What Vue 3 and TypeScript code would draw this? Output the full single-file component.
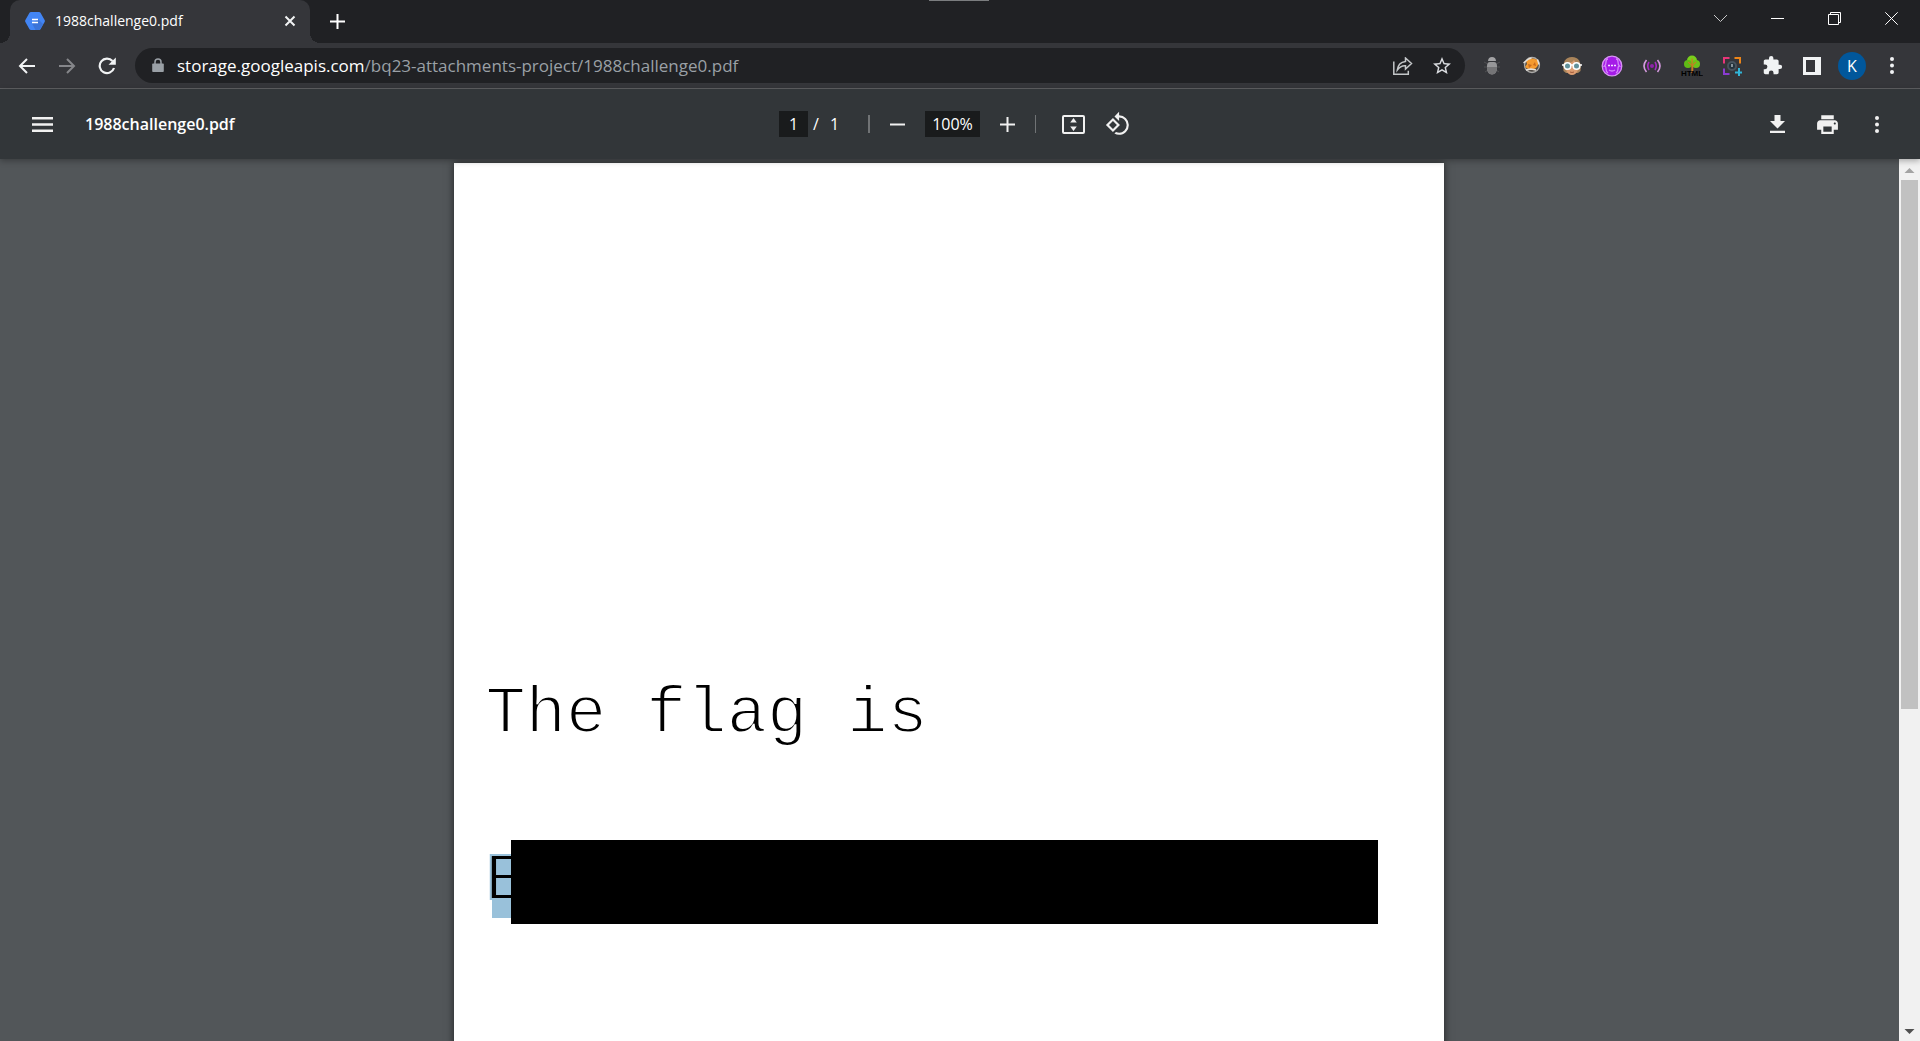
<script setup lang="ts">
import { ref } from 'vue'

interface Extension {
  id: string
  label: string
}

const fileName = '1988challenge0.pdf'
const host = 'storage.googleapis.com'
const path = '/bq23-attachments-project/1988challenge0.pdf'
const page = ref('1')
const zoom = ref('100%')

const extensions: Extension[] = [
  { id: 'bug', label: 'Bug extension' },
  { id: 'fox', label: 'Proxy switcher' },
  { id: 'face', label: 'Spy glasses' },
  { id: 'purple', label: 'Code extension' },
  { id: 'signal', label: 'Signal extension' },
  { id: 'tree', label: 'HTML tree' },
  { id: 'capture', label: 'Screen capture' },
  { id: 'puzzle', label: 'Extensions' },
  { id: 'panel', label: 'Side panel' },
]
</script>

<template>
  <div class="window">
    <div class="handle"></div>
    <header class="tabstrip">
      <div class="tab">
        <svg class="favicon" width="20" height="18" viewBox="0 0 20 18">
          <path d="M6 0h8q1 0 1.500 .8l4.100 7.200q.6 1 0 2l-4.100 7.200Q15 18 14 18H6q-1 0-1.500-.8L.4 10q-.6-1 0-2L4.500.8Q5 0 6 0z" fill="#4285f4" />
          <path d="M13 7l5 5-3 5.500-1 .5h-3.500L7 11.500z" fill="#3b74d8" />
          <path d="M7 7.500h6M7 10.500h6" stroke="#fff" stroke-width="1.300" />
        </svg>
        <span class="tab-title">{{ fileName }}</span>
        <button class="tab-close" aria-label="Close tab">
          <svg width="12" height="12" viewBox="0 0 12 12"><path d="M1.500 1.500l9 9M10.500 1.500l-9 9" stroke="#f1f3f4" stroke-width="2" /></svg>
        </button>
      </div>
      <button class="new-tab" aria-label="New tab">
        <svg width="15" height="15" viewBox="0 0 15 15"><path d="M7.500 0v15M0 7.500h15" stroke="#fff" stroke-width="2" /></svg>
      </button>
      <div class="controls">
        <button aria-label="Search tabs">
          <svg width="15" height="15" viewBox="0 0 15 15" fill="none"><path d="M1 4l6.500 6.500L14 4" stroke="#c8c9ca" /></svg>
        </button>
        <button aria-label="Minimize">
          <svg width="13" height="13" viewBox="0 0 13 13"><path d="M0 6.500h13" stroke="#fff" /></svg>
        </button>
        <button aria-label="Restore">
          <svg width="13" height="13" viewBox="0 0 13 13" fill="none" stroke="#fff"><path d="M.5 2.500h10v10H.5zM2.500 2.500v-2h10v10h-2" /></svg>
        </button>
        <button aria-label="Close">
          <svg width="13" height="13" viewBox="0 0 13 13"><path d="M.3.3l12.400 12.400M12.700.3L.3 12.700" stroke="#fff" /></svg>
        </button>
      </div>
    </header>

    <nav class="toolbar">
      <button class="nav-btn" aria-label="Back">
        <svg width="18" height="18" viewBox="0 0 18 18" fill="none" stroke="#f1f3f4" stroke-width="2"><path d="M17 9H2.500M9 2L2 9l7 7" /></svg>
      </button>
      <button class="nav-btn" aria-label="Forward">
        <svg width="18" height="18" viewBox="0 0 18 18" fill="none" stroke="#85868a" stroke-width="2"><path d="M1 9h14.500M9 2l7 7-7 7" /></svg>
      </button>
      <button class="nav-btn" aria-label="Reload">
        <svg width="18" height="18" viewBox="0 0 18 18" fill="none"><path d="M14.500 4A7.300 7.300 0 1 0 16 11" stroke="#f1f3f4" stroke-width="2.200" /><path d="M17.800.5v7.300h-7.300z" fill="#f1f3f4" /></svg>
      </button>
      <div class="omnibox">
        <svg class="lock" width="12" height="16" viewBox="0 0 12 16"><path d="M1 5.500h10q.8 0 .8.900v6.700q0 .9-.8.900H1q-.8 0-.8-.9V6.400q0-.9.800-.9z" fill="#9aa0a6" /><path d="M3 6V4a3 3 0 0 1 6 0v2" fill="none" stroke="#9aa0a6" stroke-width="1.500" /></svg>
        <a class="url" href="#">{{ host }}<span>{{ path }}</span></a>
        <button class="omni-btn" aria-label="Share">
          <svg width="20" height="18" viewBox="0 0 20 18" fill="none" stroke="#c4c7c9" stroke-width="1.500"><path d="M.8 4.500v12.700h14.500v-3.500" /><path d="M12.500 1l6 5.500-6 5.500V8.800C9 8.500 6.500 10 4.300 13c.5-4.500 3-8 8.200-8.600z" /></svg>
        </button>
        <button class="omni-btn" aria-label="Bookmark this tab">
          <svg width="18" height="18" viewBox="0 0 20 20"><path d="M20 7.240l-7.190-.62L10 0 7.190 6.630 0 7.240l5.460 4.730L3.820 19 10 15.270 16.180 19l-1.630-7.030L20 7.240zM10 13.400l-3.760 2.270 1-4.280-3.320-2.880 4.380-.38L10 4.100l1.710 4.040 4.380.38-3.320 2.880 1 4.280L10 13.400z" fill="#dadce0" /></svg>
        </button>
      </div>

      <div class="extensions">
        <button v-for="ext in extensions" :key="ext.id" :aria-label="ext.label">
          <svg v-if="ext.id === 'bug'" width="20" height="20" viewBox="0 0 20 20">
            <path d="M2 6l3 1.500M18 6l-3 1.500M2 11h3M18 11h-3M3 16l3-2M17 16l-3-2" stroke="#505053" />
            <path d="M6 5q.3-4 4-4t4 4z" fill="#a3a3a5" /><path d="M5 10q0-4 3-4h4q3 0 3 4v2q-.5 6.500-5 6.500T5 12z" fill="#979799" /><path d="M5 11h10v1q-.5 6.500-5 6.500T5 12z" fill="#757577" />
          </svg>
          <svg v-else-if="ext.id === 'fox'" width="20" height="20" viewBox="0 0 20 20">
            <circle cx="10" cy="9" r="7.500" fill="#4f4a45" stroke="#aaa9a7" stroke-width="1.300" />
            <path d="M4 5q3-3 7-2.500l5 1.500q1 5-2 8-4 3-8 1l-3-2 2-3z" fill="#f49a2e" />
            <path d="M1.500 7l5-4 3-1M4 14l5-1 5 1M15.500 3.500l1.500 5" fill="none" stroke="#e6e2dc" stroke-width="1.400" /><path d="M6 8l4 1-3 3zM13 6l-2 3 3 1z" fill="#c96a1c" />
          </svg>
          <svg v-else-if="ext.id === 'face'" width="20" height="20" viewBox="0 0 20 20">
            <path d="M1.500 15Q0 1 10 1t8.500 14L16 17H4z" fill="#a9845a" /><path d="M4 8q6-1 8-4 1 3 4 4v6q-2 5-6 5t-6-5z" fill="#dc9d71" />
            <path d="M0 9h20" stroke="#fff" stroke-width="1.500" /><circle cx="5.500" cy="10" r="3.300" fill="#62929b" stroke="#fff" stroke-width="1.600" /><circle cx="14.500" cy="10" r="3.300" fill="#62929b" stroke="#fff" stroke-width="1.600" />
            <path d="M8 16q2 1 4 0" fill="none" stroke="#a15b3c" />
          </svg>
          <svg v-else-if="ext.id === 'purple'" width="22" height="22" viewBox="0 0 22 22" fill="none">
            <circle cx="11" cy="11" r="9.800" fill="#a51be8" stroke="#d893f5" stroke-width="1.300" />
            <path d="M7 4Q5 4 5 7t-1.500 4Q5 11 5 14t2 4M15 4q2 0 2 3t1.500 4Q17 11 17 14t-2 4M8 15q3 2 6 0" stroke="#d287f7" stroke-width="1.300" /><path d="M7 10.500h2M10 10.500h2M13 10.500h2" stroke="#f5dfff" stroke-width="1.500" />
          </svg>
          <svg v-else-if="ext.id === 'signal'" width="18" height="14" viewBox="0 0 18 14" fill="none">
            <circle cx="9" cy="7" r="2" fill="#8e24aa" /><path d="M6 3Q3.500 7 6 11M12 3q2.500 4 0 8" stroke="#a62bc2" stroke-width="1.600" /><path d="M3.500 1q-5 6 0 12M14.500 1q5 6 0 12" stroke="#d69be0" stroke-width="1.600" />
          </svg>
          <svg v-else-if="ext.id === 'tree'" width="22" height="22" viewBox="0 0 22 22">
            <circle cx="11" cy="5.500" r="5" fill="#78cf1b" /><circle cx="7" cy="9" r="4" fill="#5fbb15" /><circle cx="15" cy="9" r="4" fill="#6cc31a" />
            <path d="M10.300 18v-7.500L7 7.500l.6-.7 2.900 2.700V3.500h1.200v6l3-3 .7.800-3.100 3.200V18z" fill="#c77b25" />
            <text x="11" y="20.500" text-anchor="middle" font-family="Liberation Sans, sans-serif" font-size="8" font-weight="700" fill="#000">HTML</text>
          </svg>
          <svg v-else-if="ext.id === 'capture'" width="20" height="20" viewBox="0 0 20 20" fill="none" stroke-width="2">
            <path d="M2 7.500V2h5.500" stroke="#e83578" /><path d="M12.500 2H18v5.500" stroke="#ed8518" /><path d="M2 12.500V18h5.500" stroke="#8b3bd1" /><path d="M17 12v8M13 16.500h7" stroke="#31b5d8" />
            <circle cx="10" cy="10" r="4" fill="#24333d" stroke="#48545e" /><path d="M10 8v3" stroke="#bfc9ce" stroke-width="1.300" />
          </svg>
          <svg v-else-if="ext.id === 'puzzle'" width="21" height="21" viewBox="0 0 24 24"><path d="M20.500 11H19V7c0-1.100-.9-2-2-2h-4V3.500a2.500 2.500 0 0 0-5 0V5H4c-1.100 0-1.990.9-1.990 2v3.800H3.500a2.700 2.700 0 0 1 0 5.400H2V20c0 1.100.9 2 2 2h3.800v-1.500a2.700 2.700 0 0 1 5.400 0V22H17c1.100 0 2-.9 2-2v-4h1.500a2.500 2.500 0 0 0 0-5z" fill="#f1f3f4" /></svg>
          <svg v-else width="18" height="18" viewBox="0 0 18 18"><path d="M0 0h18v18H0zM3 3v12h9V3z" fill="#f1f3f4" fill-rule="evenodd" /></svg>
        </button>
        <button aria-label="Profile"><span class="avatar">K</span></button>
        <button aria-label="Browser menu">
          <svg width="4" height="17" viewBox="0 0 4 17" fill="#f1f3f4"><circle cx="2" cy="2" r="2" /><circle cx="2" cy="8.500" r="2" /><circle cx="2" cy="15" r="2" /></svg>
        </button>
      </div>
    </nav>

    <div class="pdf-toolbar">
      <div class="pdf-left">
        <button class="menu" aria-label="Menu">
          <svg width="21" height="15" viewBox="0 0 21 15"><path d="M0 1.200h21M0 7.500h21M0 13.800h21" stroke="#f1f1f1" stroke-width="2.400" /></svg>
        </button>
        <h1>{{ fileName }}</h1>
      </div>
      <div class="pdf-center">
        <input v-model="page" class="page-input" aria-label="Page number" />
        <span class="slash">/</span>
        <span class="total">1</span>
        <i class="sep wide"></i>
        <button class="zoom-btn" aria-label="Zoom out">
          <svg width="15" height="15" viewBox="0 0 15 15"><path d="M0 7.500h15" stroke="#f1f1f1" stroke-width="2" /></svg>
        </button>
        <input v-model="zoom" class="zoom-input" aria-label="Zoom level" />
        <button class="zoom-btn" aria-label="Zoom in">
          <svg width="15" height="15" viewBox="0 0 15 15"><path d="M0 7.500h15M7.500 0v15" stroke="#f1f1f1" stroke-width="2" /></svg>
        </button>
        <i class="sep"></i>
        <button class="fit" aria-label="Fit to page">
          <svg width="23" height="19" viewBox="0 0 23 19"><rect x="1" y="1" width="21" height="17" rx="1" fill="none" stroke="#f1f1f1" stroke-width="2" /><path d="M11.500 3L14.800 7.500H8.200zM11.500 16L14.800 11.500H8.200z" fill="#f1f1f1" /></svg>
        </button>
        <button class="rotate" aria-label="Rotate counterclockwise">
          <svg width="26" height="26" viewBox="0 0 24 24" fill="#f1f1f1"><path d="M7.340 6.410L.86 12.900l6.490 6.480 6.490-6.480-6.500-6.490zM3.690 12.900l3.660-3.660L11 12.900l-3.660 3.660-3.650-3.660zm15.670-6.260A8.950 8.950 0 0 0 13 4V.76L8.760 5 13 9.240V6c1.790 0 3.580.68 4.950 2.050a7.007 7.007 0 0 1 0 9.900 6.973 6.973 0 0 1-7.790 1.440l-1.490 1.490C10.020 21.620 11.510 22 13 22c2.300 0 4.610-.88 6.360-2.640a8.980 8.980 0 0 0 0-12.720z" /></svg>
        </button>
      </div>
      <div class="pdf-right">
        <button aria-label="Download">
          <svg width="15" height="18" viewBox="0 0 15 18" fill="#f1f1f1"><path d="M4.500 0h6v6H15l-7.500 7.500L0 6h4.500zM0 15.800h15V18H0z" /></svg>
        </button>
        <button aria-label="Print">
          <svg width="25" height="25" viewBox="0 0 24 24" fill="#f1f1f1"><path d="M19 8H5c-1.660 0-3 1.340-3 3v6h4v4h12v-4h4v-6c0-1.660-1.340-3-3-3zm-3 11H8v-5h8v5zm3-7c-.55 0-1-.45-1-1s.45-1 1-1 1 .45 1 1-.45 1-1 1zm-1-9H6v4h12V3z" /></svg>
        </button>
        <button aria-label="More actions">
          <svg width="4" height="17" viewBox="0 0 4 17" fill="#f1f1f1"><circle cx="2" cy="2" r="2" /><circle cx="2" cy="8.500" r="2" /><circle cx="2" cy="15" r="2" /></svg>
        </button>
      </div>
    </div>

    <div class="viewer">
      <main class="canvas">
        <article class="page">
          <p class="line">The flag is</p>
          <div class="redacted">
            <span class="selected">E</span>
            <span class="bar"></span>
          </div>
        </article>
      </main>
      <div class="scrollbar">
        <svg width="21" height="21" viewBox="0 0 21 21"><path d="M10.500 9l5 5h-10z" fill="#a3a3a3" /></svg>
        <div class="track"><div class="thumb"></div></div>
        <svg width="21" height="21" viewBox="0 0 21 21"><path d="M10.500 14l5-5h-10z" fill="#505050" /></svg>
      </div>
    </div>
  </div>
</template>

<style>
body {
  margin: 0;
  background: #525659;
}
</style>

<style scoped>
.window {
  position: relative;
  display: flex;
  flex-direction: column;
  height: 100vh;
  overflow: hidden;
  color: #fff;
  font-family: "Open Sans", "Noto Sans", sans-serif;
}

button {
  display: flex;
  align-items: center;
  justify-content: center;
  padding: 0;
  border: 0;
  background: none;
  color: inherit;
  font: inherit;
}

svg {
  display: block;
  flex: none;
}

.handle {
  position: absolute;
  top: 0;
  left: calc(50% - 31px);
  width: 60px;
  height: 1px;
  background: #7b7d7f;
}

.tabstrip {
  display: flex;
  flex: none;
  height: 43px;
  padding-left: 10px;
  background: #202124;
}

.tab {
  position: relative;
  display: flex;
  align-items: center;
  box-sizing: border-box;
  width: 300px;
  padding: 0 12px 2px 15px;
  border-radius: 10px 10px 0 0;
  background: #35363a;
}

.tab::before,
.tab::after {
  content: "";
  position: absolute;
  bottom: 0;
  width: 10px;
  height: 10px;
}

.tab::before {
  right: 100%;
  background: radial-gradient(circle at 0 0, transparent 10px, #35363a 10px);
}

.tab::after {
  left: 100%;
  background: radial-gradient(circle at 100% 0, transparent 10px, #35363a 10px);
}

.tab-title {
  flex: 1;
  margin-left: 10px;
  font-size: 14px;
  line-height: 20px;
}

.tab-close {
  width: 16px;
  height: 20px;
}

.new-tab {
  width: 55px;
}

.controls {
  display: flex;
  height: 37px;
  margin-left: auto;
}

.controls button {
  width: 57px;
}

.toolbar {
  display: flex;
  align-items: center;
  flex: none;
  height: 45px;
  padding: 0 8px 0 7px;
  border-bottom: 1px solid #5f6063;
  background: #35363a;
}

.nav-btn {
  width: 40px;
  height: 35px;
}

.omnibox {
  display: flex;
  align-items: center;
  flex: 1;
  height: 35px;
  margin: 0 7px 0 8px;
  padding: 0 4px 0 17px;
  border-radius: 18px;
  background: #202124;
}

.url {
  flex: 1;
  margin-left: 13px;
  color: #fff;
  font-size: 17px;
  line-height: 24px;
  text-decoration: none;
  white-space: nowrap;
}

.url span {
  color: #9aa0a6;
}

.omni-btn {
  width: 39px;
  height: 35px;
}

.extensions {
  display: flex;
}

.extensions button {
  width: 40px;
  height: 35px;
}

.avatar {
  width: 28px;
  height: 28px;
  border-radius: 50%;
  background: #01579b;
  font-size: 16px;
  line-height: 28px;
}

.pdf-toolbar {
  position: relative;
  z-index: 1;
  display: grid;
  grid-template-columns: 1fr auto 1fr;
  align-items: center;
  flex: none;
  height: 70px;
  background: #323639;
  box-shadow: 0 2px 6px rgba(0, 0, 0, 0.3);
}

.pdf-left,
.pdf-center,
.pdf-right {
  display: flex;
  align-items: center;
}

.menu {
  width: 45px;
  height: 40px;
  margin-left: 20px;
}

h1 {
  margin: 0 0 0 20px;
  font-size: 16px;
  font-weight: 600;
  line-height: 24px;
}

.pdf-center {
  padding-right: 8px;
  font-size: 16px;
  line-height: 26px;
}

input {
  box-sizing: border-box;
  height: 26px;
  padding: 0;
  border: 0;
  background: #191b1c;
  color: #fff;
  font: inherit;
  text-align: center;
}

.page-input {
  width: 29px;
}

.slash {
  width: 17px;
  margin-left: 5px;
}

.total {
  width: 38px;
}

.sep {
  width: 1px;
  height: 18px;
  background: #707375;
}

.sep.wide {
  width: 2px;
}

.zoom-btn {
  width: 55px;
  height: 40px;
}

.zoom-input {
  width: 55px;
}

.fit {
  width: 60px;
  height: 40px;
  margin-left: 7px;
}

.rotate {
  width: 30px;
  height: 40px;
}

.pdf-right {
  justify-content: flex-end;
  padding-right: 18px;
}

.pdf-right button {
  width: 50px;
  height: 40px;
}

.viewer {
  display: flex;
  flex: 1;
  min-height: 0;
}

.canvas {
  flex: 1;
  overflow: hidden;
  padding: 4px 2px 0 0;
  background: #525659;
}

.page {
  box-sizing: border-box;
  width: 990px;
  height: 1280px;
  margin: 0 auto;
  padding: 513px 32px 0;
  background: #fff;
  box-shadow: 0 0 8px rgba(0, 0, 0, 0.6);
  color: #000;
  font-family: "Liberation Mono", monospace;
  font-size: 67px;
}

.line {
  margin: 0 0 88px;
  line-height: 76px;
  -webkit-text-stroke: 2px #fff;
}

.redacted {
  display: flex;
  align-items: center;
  height: 84px;
}

.selected {
  width: 40px;
  height: 61px;
  margin-top: 10px;
  background: linear-gradient(90deg, transparent 6px, #99c1da 6px);
  line-height: 48px;
  -webkit-text-stroke: 2px #99c1da;
}

.bar {
  position: relative;
  width: 867px;
  height: 84px;
  margin-left: -15px;
  background: #000;
}

.scrollbar {
  display: flex;
  flex-direction: column;
  width: 21px;
  background: #f1f1f1;
}

.track {
  flex: 1;
}

.thumb {
  width: 17px;
  height: 63%;
  margin: 0 auto;
  background: #c1c1c1;
}
</style>
